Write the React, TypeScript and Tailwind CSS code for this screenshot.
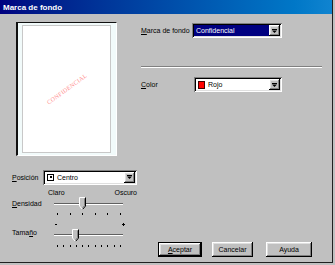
import React from 'react';

const sunken =
  'shadow-[inset_1px_1px_0_#808080,inset_-1px_-1px_0_#ffffff,inset_2px_2px_0_#000000,inset_-2px_-2px_0_#dfdfdf]';
const raised =
  'shadow-[inset_-1px_-1px_0_#000000,inset_1px_1px_0_#ffffff,inset_-2px_-2px_0_#808080,inset_2px_2px_0_#dfdfdf]';

function Arrow() {
  return (
    <div className={`w-[11px] h-full bg-[#c0c0c0] flex items-center justify-center ${raised}`}>
      <svg width="5" height="4" viewBox="0 0 5 4">
        <rect x="0" y="0" width="5" height="1" fill="#000" />
        <polygon points="0,1.5 5,1.5 2.5,4" fill="#000" />
      </svg>
    </div>
  );
}

function Combo({ width, children, selected }: { width: string; children: React.ReactNode; selected?: boolean }) {
  return (
    <div className={`flex h-[15px] bg-white p-[2px] ${width} ${sunken}`}>
      <div
        className={`flex-1 flex items-center gap-[3px] px-[2px] ${selected ? 'bg-[#000080] text-white' : 'text-black'}`}
      >
        {children}
      </div>
      <Arrow />
    </div>
  );
}

function Thumb() {
  return (
    <svg width="7" height="13" viewBox="0 0 7 13">
      <polygon points="0.5,0.5 6.5,0.5 6.5,9 3.5,12.5 0.5,9" fill="#c0c0c0" />
      <polyline points="0.5,9 0.5,0.5 6.5,0.5" fill="none" stroke="#ffffff" strokeWidth="1" />
      <polyline points="6.5,0.5 6.5,9 3.5,12.5" fill="none" stroke="#000000" strokeWidth="1" />
      <polyline points="0.5,9 3.5,12.5" fill="none" stroke="#ffffff" strokeWidth="1" />
      <polyline points="5.5,1.5 5.5,8.6 3.5,11" fill="none" stroke="#808080" strokeWidth="1" />
    </svg>
  );
}

function Slider({ at, top }: { at: string; top: string }) {
  return (
    <div className="relative w-[69px] h-full">
      <div className="absolute left-0 right-0 top-[6px] h-[2px] border-t border-[#606060] border-b border-b-white" />
      <div className={`absolute ${at} ${top}`}>
        <Thumb />
      </div>
    </div>
  );
}

function Ticks({ count }: { count: number }) {
  return (
    <div className="ml-[57px] w-[64px] h-[2px] flex justify-between">
      {Array.from({ length: count }).map((_, i) => (
        <div key={i} className="w-px h-[2px] bg-black" />
      ))}
    </div>
  );
}

function Button({ label, def }: { label: React.ReactNode; def?: boolean }) {
  return (
    <div className={`${def ? 'border border-black' : ''} h-[15px] flex`}>
      <div className={`flex-1 flex items-center justify-center bg-[#c0c0c0] ${raised}`}>{label}</div>
    </div>
  );
}

export default function App() {
  return (
    <div className="w-[335px] h-[265px] bg-[#c0c0c0] font-['Liberation_Sans',Arial,sans-serif] text-[7px] leading-[9px] text-black">
      <div className="w-[333px] h-[263px] flex flex-col border-r border-b border-[#202020]">
        {/* barra de título */}
        <div className="h-[14px] flex items-center px-[3px] bg-linear-to-r from-[#000080] to-[#1084d0] text-white font-bold text-[8px]">
          Marca de fondo
        </div>

        <div className="flex-1 flex">
          {/* columna izquierda */}
          <div className="w-[141px] flex flex-col">
            <div className="ml-[16px] mt-[8px] w-[101px] h-[134px] border-l-2 border-t border-[#101010] border-r border-b border-r-white border-b-white bg-[#f1fafa] pl-[4px] pt-[2px] pr-[5px] pb-[2px]">
              <div className="w-full h-full border border-[#c8c8c8] bg-white flex items-center justify-center">
                <span className="-rotate-[36deg] font-['Liberation_Serif',serif] text-[6px] leading-[6px] tracking-[0.3px] text-[#ff8c8c]">
                  CONFIDENCIAL
                </span>
              </div>
            </div>

            <div className="mt-[14px] h-[14px] flex items-center pl-[12px]">
              <span className="w-[31px]">
                <span className="underline">P</span>osición
              </span>
              <Combo width="w-[94px]">
                <div className="w-[7px] h-[7px] border border-black flex items-center justify-center">
                  <div className="w-[2px] h-[2px] bg-black" />
                </div>
                <span>Centro</span>
              </Combo>
            </div>

            <div className="mt-[4px] h-[9px] ml-[48px] w-[89px] flex justify-between">
              <span>Claro</span>
              <span>Oscuro</span>
            </div>

            <div className="h-[14px] flex pl-[12px]">
              <span className="w-[42px] pt-[2px]">
                <span className="underline">D</span>ensidad
              </span>
              <Slider at="left-[25px]" top="top-0" />
            </div>
            <div className="mt-[2px]">
              <Ticks count={6} />
            </div>

            <div className="mt-[8px] h-[3px] ml-[55px] w-[70px] flex justify-between items-center">
              <div className="w-[2px] h-px bg-black" />
              <div className="relative w-[3px] h-[3px]">
                <div className="absolute left-0 top-[1px] w-[3px] h-px bg-black" />
                <div className="absolute left-[1px] top-0 w-px h-[3px] bg-black" />
              </div>
            </div>

            <div className="mt-[2px] h-[15px] flex pl-[12px]">
              <span className="w-[42px]">
                Tama<span className="underline">ñ</span>o
              </span>
              <Slider at="left-[18px]" top="top-[1px]" />
            </div>
            <div className="mt-[2px]">
              <Ticks count={11} />
            </div>
          </div>

          {/* columna derecha */}
          <div className="flex-1 flex flex-col">
            <div className="mt-[9px] h-[15px] flex items-center">
              <span className="w-[51px]">
                <span className="underline">M</span>arca de fondo
              </span>
              <Combo width="w-[90px]" selected>
                <span>Confidencial</span>
              </Combo>
            </div>

            <div className="mt-[28px] w-[181px] h-[2px] border-t border-[#808080] border-b border-b-white" />

            <div className="mt-[9px] h-[15px] flex items-center">
              <span className="w-[53px]">
                <span className="underline">C</span>olor
              </span>
              <Combo width="w-[88px]">
                <div className="w-[7px] h-[8px] border border-[#400000] bg-[#ff0000]" />
                <span>Rojo</span>
              </Combo>
            </div>

            <div className="mt-auto mb-[5px] pl-[17px] flex">
              <div className="w-[44px]">
                <Button
                  def
                  label={
                    <span>
                      <span className="underline">A</span>ceptar
                    </span>
                  }
                />
              </div>
              <div className="w-[41px] ml-[10px]">
                <Button label="Cancelar" />
              </div>
              <div className="w-[46px] ml-[13px]">
                <Button label="Ayuda" />
              </div>
            </div>
          </div>
        </div>
      </div>
    </div>
  );
}
